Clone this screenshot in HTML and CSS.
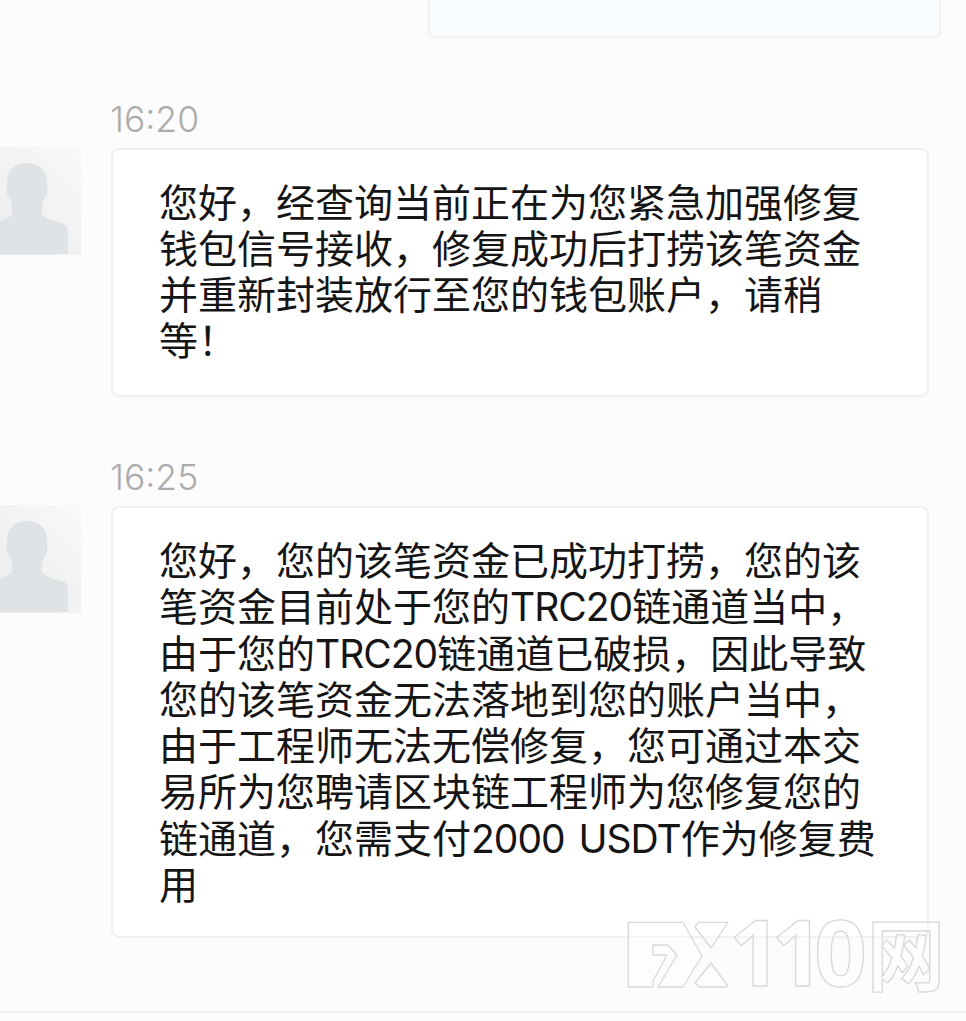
FILE: index.html
```html
<!DOCTYPE html>
<html lang="zh-CN">
<head>
<meta charset="utf-8">
<title>聊天记录</title>
<link rel="stylesheet" href="styles.css">
</head>
<body>
<main class="chat">
  <div class="bubble-own"></div>
  <section class="group group-first">
    <div class="time">16:20</div>
    <div class="row">
      <svg class="avatar" viewBox="0 0 108 108" aria-hidden="true">
        <defs><linearGradient id="av1" x1="1" y1="0" x2="0" y2="1"><stop offset="0" stop-color="#f8f9f9"/><stop offset="1" stop-color="#e8eaec"/></linearGradient></defs>
        <rect width="108" height="108" fill="url(#av1)"/>
        <path fill="#e0e3e6" d="M54 16c11 0 20 6 20 19 0 5 1 8 0 12-1 3-3 4-4 8-1 5-2 9-1 12 3 5 14 7 22 10 5 2 4 10 4 30H11c0-20 1-28 6-30 8-3 19-5 22-10 1-3 0-7-1-12-1-4-3-5-4-8-1-4 0-7 0-12C34 22 43 16 54 16z"/>
      </svg>
      <div class="bubble">您好，经查询当前正在为您紧急加强修复<br>钱包信号接收，修复成功后打捞该笔资金<br>并重新封装放行至您的钱包账户，请稍<br>等！</div>
    </div>
  </section>
  <section class="group group-second">
    <div class="time">16:25</div>
    <div class="row">
      <svg class="avatar" viewBox="0 0 108 108" aria-hidden="true">
        <defs><linearGradient id="av2" x1="1" y1="0" x2="0" y2="1"><stop offset="0" stop-color="#f8f9f9"/><stop offset="1" stop-color="#e8eaec"/></linearGradient></defs>
        <rect width="108" height="108" fill="url(#av2)"/>
        <path fill="#e0e3e6" d="M54 16c11 0 20 6 20 19 0 5 1 8 0 12-1 3-3 4-4 8-1 5-2 9-1 12 3 5 14 7 22 10 5 2 4 10 4 30H11c0-20 1-28 6-30 8-3 19-5 22-10 1-3 0-7-1-12-1-4-3-5-4-8-1-4 0-7 0-12C34 22 43 16 54 16z"/>
      </svg>
      <div class="bubble bubble-long">您好，您的该笔资金已成功打捞，您的该<br>笔资金目前处于您的<span class="latin">TRC20</span>链通道当中，<br>由于您的<span class="latin">TRC20</span>链通道已破损，因此导致<br>您的该笔资金无法落地到您的账户当中，<br>由于工程师无法无偿修复，您可通过本交<br>易所为您聘请区块链工程师为您修复您的<br>链通道，您需支付<span class="latin">2000 USDT</span>作为修复费<br>用</div>
    </div>
  </section>
  <div class="watermark">
    <svg class="wm-logo" viewBox="0 0 102 68" aria-hidden="true">
      <g fill="rgba(255,255,255,.35)" stroke="#d8d8d8" stroke-width="1.3" stroke-linejoin="round">
        <path d="M1.3 2.3H56L75 36 56 67H31L50 35 41 25H26V35H40L26 61V67H1.3z"/>
        <path d="M71 2.3H101L84 28 68 7z"/>
        <path d="M84 43 101 66 99 67H73L68 63z"/>
      </g>
    </svg>
    <span class="wm-digits">110</span>
    <span class="wm-char">网</span>
  </div>
</main>
</body>
</html>
```

FILE: styles.css
```css
* { box-sizing: border-box; }
html, body { margin: 0; padding: 0; }
body {
  width: 966px;
  height: 1021px;
  overflow: hidden;
  background: #fcfcfc;
  font-family: "Noto Sans CJK SC", "Noto Sans", sans-serif;
  color: #151515;
}
.chat {
  position: relative;
  height: 1013px;
  border-bottom: 2px solid #ececec;
  display: flex;
  flex-direction: column;
}
.bubble-own {
  align-self: flex-end;
  width: 513px;
  height: 38px;
  margin-right: 25px;
  background: #f8fcff;
  border: 2px solid #f0f0f0;
  border-top: 0;
  border-radius: 0 0 6px 6px;
}
.group-first { margin-top: 62px; }
.group-second { margin-top: 61px; }
.time {
  margin-left: 110px;
  font-family: Inter, Roboto, sans-serif;
  font-weight: 300;
  font-size: 35.5px;
  line-height: 40px;
  color: #ababab;
}
.row {
  display: flex;
  align-items: flex-start;
  margin-top: 7px;
  margin-left: -27px;
}
.avatar {
  flex: none;
  width: 108px;
  height: 108px;
  margin-right: 30px;
}
.bubble {
  width: 818px;
  margin-top: 1px;
  padding: 27px 0 34px 46px;
  background: #fff;
  border: 2px solid #f0f0f0;
  border-radius: 8px;
  font-size: 39px;
  line-height: 46px;
  white-space: nowrap;
}
.latin {
  font-family: Inter, "Noto Sans", sans-serif;
  font-weight: 400;
  line-height: 1;
  letter-spacing: -1px;
  word-spacing: 4px;
}
.bubble-long {
  padding-top: 27px;
  padding-bottom: 31px;
  line-height: 46.3px;
}
.watermark {
  position: absolute;
  left: 627px;
  top: 917px;
  display: flex;
  align-items: center;
}
.wm-logo { flex: none; width: 102px; height: 68px; }
.wm-digits {
  margin-bottom: 5px;
  font-family: "Noto Sans", sans-serif;
  font-weight: 700;
  font-size: 92px;
  line-height: 68px;
  letter-spacing: -10px;
  color: rgba(255,255,255,.35);
  -webkit-text-stroke: 1.3px #d8d8d8;
}
.wm-char {
  margin-left: 10px;
  margin-bottom: 5px;
  font-family: "Noto Sans CJK SC", sans-serif;
  font-weight: 700;
  font-size: 78px;
  line-height: 68px;
  color: rgba(255,255,255,.35);
  -webkit-text-stroke: 1.3px #d8d8d8;
}
```
